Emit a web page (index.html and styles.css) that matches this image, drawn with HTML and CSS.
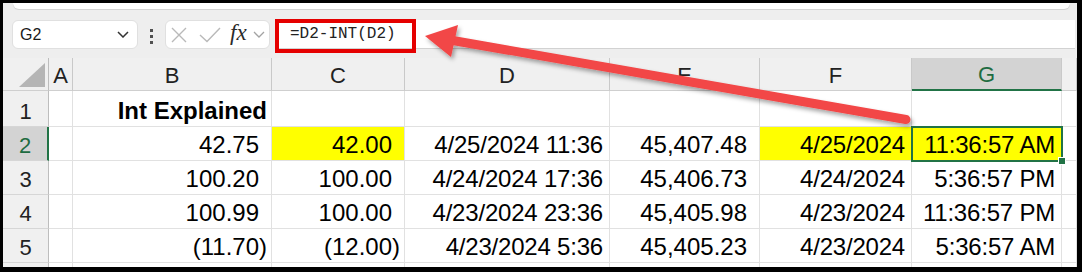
FILE: index.html
```html
<!DOCTYPE html>
<html>
<head>
<meta charset="utf-8">
<link rel="stylesheet" href="styles.css">
</head>
<body>
<div class="app">
  <div class="ribbon"><div class="ribbon-box"></div></div>
  <div class="fbar">
    <div class="namebox">
      <span class="nb-text">G2</span>
      <svg class="nb-chev" width="12" height="7" viewBox="0 0 12 7"><path d="M1 1 L6 6 L11 1" fill="none" stroke="#333" stroke-width="1.5"/></svg>
    </div>
    <div class="dots"><i></i><i></i><i></i></div>
    <div class="fbtns">
      <svg class="ic-x" width="16" height="16" viewBox="0 0 16 16"><path d="M1 1 L15 15 M15 1 L1 15" fill="none" stroke="#b9b9b9" stroke-width="1.4"/></svg>
      <svg class="ic-check" width="22" height="16" viewBox="0 0 22 16"><path d="M1 8 L8 14.5 L21 1" fill="none" stroke="#b9b9b9" stroke-width="1.4"/></svg>
      <span class="fx">fx</span>
      <svg class="ic-chev" width="12" height="7" viewBox="0 0 12 7"><path d="M1 1 L6 6 L11 1" fill="none" stroke="#a3a3a3" stroke-width="1.3"/></svg>
    </div>
    <div class="finput">
      <span class="ftext">=D2-INT(D2)</span>
      <div class="redbox"></div>
    </div>
  </div>
  <div class="sheet">
    <div class="c h corner"><svg width="26" height="24" viewBox="0 0 26 24"><polygon points="26,0 26,24 0,24" fill="#b5b5b5"/></svg></div>
    <div class="c h">A</div>
    <div class="c h">B</div>
    <div class="c h">C</div>
    <div class="c h">D</div>
    <div class="c h">E</div>
    <div class="c h">F</div>
    <div class="c h hsel">G</div>
    <div class="c h"></div>

    <div class="c r">1</div>
    <div class="c"></div>
    <div class="c bold">Int Explained</div>
    <div class="c"></div>
    <div class="c"></div>
    <div class="c"></div>
    <div class="c"></div>
    <div class="c"></div>
    <div class="c"></div>

    <div class="c r rsel">2</div>
    <div class="c"></div>
    <div class="c num">42.75</div>
    <div class="c num y">42.00</div>
    <div class="c dt">4/25/2024 11:36</div>
    <div class="c num">45,407.48</div>
    <div class="c dt y">4/25/2024</div>
    <div class="c dt y sel">11:36:57 AM</div>
    <div class="c"></div>

    <div class="c r">3</div>
    <div class="c"></div>
    <div class="c num">100.20</div>
    <div class="c num">100.00</div>
    <div class="c dt">4/24/2024 17:36</div>
    <div class="c num">45,406.73</div>
    <div class="c dt">4/24/2024</div>
    <div class="c dt">5:36:57 PM</div>
    <div class="c"></div>

    <div class="c r">4</div>
    <div class="c"></div>
    <div class="c num">100.99</div>
    <div class="c num">100.00</div>
    <div class="c dt">4/23/2024 23:36</div>
    <div class="c num">45,405.98</div>
    <div class="c dt">4/23/2024</div>
    <div class="c dt">11:36:57 PM</div>
    <div class="c"></div>

    <div class="c r">5</div>
    <div class="c"></div>
    <div class="c num neg">(11.70)</div>
    <div class="c num neg">(12.00)</div>
    <div class="c dt">4/23/2024 5:36</div>
    <div class="c num">45,405.23</div>
    <div class="c dt">4/23/2024</div>
    <div class="c dt">5:36:57 AM</div>
    <div class="c"></div>

    <div class="c r"></div>
    <div class="c"></div>
    <div class="c"></div>
    <div class="c"></div>
    <div class="c"></div>
    <div class="c"></div>
    <div class="c"></div>
    <div class="c"></div>
    <div class="c"></div>
  </div>
</div>
<svg class="arrow" width="1082" height="272" viewBox="0 0 1082 272">
  <defs>
    <filter id="sh" x="-10%" y="-60%" width="120%" height="220%">
      <feDropShadow dx="2" dy="3" stdDeviation="2" flood-color="#000" flood-opacity="0.35"/>
    </filter>
  </defs>
  <g filter="url(#sh)">
    <line x1="450" y1="40" x2="906" y2="119.5" stroke="#f24646" stroke-width="9" stroke-linecap="round"/>
    <polygon points="425,36 458,25 451,57" fill="#f24646"/>
  </g>
</svg>
</body>
</html>
```

FILE: styles.css
```css
html, body {
  margin: 0;
  padding: 0;
}
body {
  width: 1082px;
  height: 272px;
  background: #000;
  position: relative;
  overflow: hidden;
  box-sizing: border-box;
  padding: 3px 5px 0 3px;
  font-family: "Liberation Sans", Arial, sans-serif;
}
.app {
  width: 1074px;
  height: 264px;
  overflow: hidden;
  background: #fff;
}
.ribbon {
  height: 7px;
  background: #ececec;
}
.ribbon-box {
  margin: 0 7px 0 10px;
  height: 6px;
  background: #fff;
  border-radius: 0 0 8px 8px;
  box-shadow: 0 1px 1px rgba(0, 0, 0, 0.12);
}
.fbar {
  height: 48px;
  box-sizing: border-box;
  padding: 10px 0 0 9px;
  background: #eeeeee;
  display: flex;
  align-items: flex-start;
}
.namebox {
  width: 126px;
  height: 29px;
  box-sizing: border-box;
  background: #fff;
  border: 1px solid #e0e0e0;
  border-radius: 6px;
  display: flex;
  align-items: center;
  justify-content: space-between;
  padding: 0 8px 0 7px;
}
.nb-text {
  font-size: 16px;
  color: #1a1a1a;
}
.dots {
  width: 27px;
  height: 29px;
  box-sizing: border-box;
  padding-top: 9px;
  display: flex;
  flex-direction: column;
  align-items: center;
  gap: 3px;
}
.dots i {
  display: block;
  width: 3px;
  height: 3px;
  background: #505050;
}
.fbtns {
  width: 105px;
  height: 29px;
  box-sizing: border-box;
  background: #fff;
  border: 1px solid #e0e0e0;
  border-radius: 6px;
  display: flex;
  align-items: center;
  padding-left: 5px;
}
.ic-check {
  margin-left: 12px;
}
.fx {
  font-family: "Liberation Serif", "Times New Roman", serif;
  font-style: italic;
  font-size: 23px;
  color: #2a2a2a;
  margin-left: 9px;
  line-height: 22px;
  margin-top: -3px;
}
.ic-chev {
  margin-left: 6px;
}
.finput {
  margin-left: 5px;
  width: 800px;
  height: 29px;
  box-sizing: border-box;
  background: #fff;
  border-bottom: 1px solid #d2d2d2;
  position: relative;
  display: flex;
  align-items: center;
  padding-left: 15px;
}
.ftext {
  font-family: "Liberation Mono", "DejaVu Sans Mono", monospace;
  font-size: 16px;
  color: #222;
}
.redbox {
  position: absolute;
  left: 0;
  top: -1px;
  width: 141px;
  height: 34px;
  box-sizing: border-box;
  border: 4px solid #e50000;
}
.sheet {
  display: grid;
  grid-template-columns: 46px 24px 199px 133px 205px 150px 152px 150px 1fr;
  grid-template-rows: 33px 36px repeat(5, 34px);
  background: #fff;
}
.c {
  box-sizing: border-box;
  border-right: 1px solid #e1e1e1;
  border-bottom: 1px solid #e1e1e1;
  display: flex;
  align-items: flex-end;
  justify-content: flex-end;
  font-size: 24px;
  line-height: 26px;
  padding-bottom: 2px;
  color: #000;
  white-space: nowrap;
}
.h {
  background: #f0f0f0;
  border-right: 1px solid #c9c9c9;
  border-bottom: 1px solid #cfcfcf;
  justify-content: center;
  font-size: 22px;
  line-height: 24px;
  color: #222;
}
.corner {
  justify-content: flex-end;
  padding: 0 3px 3px 0;
  border-right: 1px solid #bdbdbd;
}
.hsel {
  background: #d3d3d3;
  color: #1e6c41;
  border-bottom: 2px solid #217346;
}
.r {
  background: #f0f0f0;
  border-right: 1px solid #bdbdbd;
  border-bottom: 1px solid #d6d6d6;
  justify-content: center;
  font-size: 22px;
  line-height: 24px;
  color: #222;
}
.rsel {
  background: #d3d3d3;
  color: #1e6c41;
  border-right: 2px solid #217346;
}
.bold {
  font-weight: bold;
  padding-right: 4px;
}
.num {
  padding-right: 12px;
}
.neg {
  padding-right: 4px;
}
.dt {
  padding-right: 6px;
  letter-spacing: -0.2px;
}
.y {
  background: #ffff00;
}
.sel {
  position: relative;
}
.sel::after {
  content: "";
  position: absolute;
  left: -1px;
  top: -1px;
  right: -2px;
  bottom: -2px;
  border: 2px solid #217346;
  z-index: 2;
}
.sel::before {
  content: "";
  position: absolute;
  right: -5px;
  bottom: -5px;
  width: 6px;
  height: 6px;
  background: #217346;
  border: 1px solid #fff;
  z-index: 3;
}
.arrow {
  position: absolute;
  left: 0;
  top: 0;
  pointer-events: none;
  z-index: 10;
}
```
